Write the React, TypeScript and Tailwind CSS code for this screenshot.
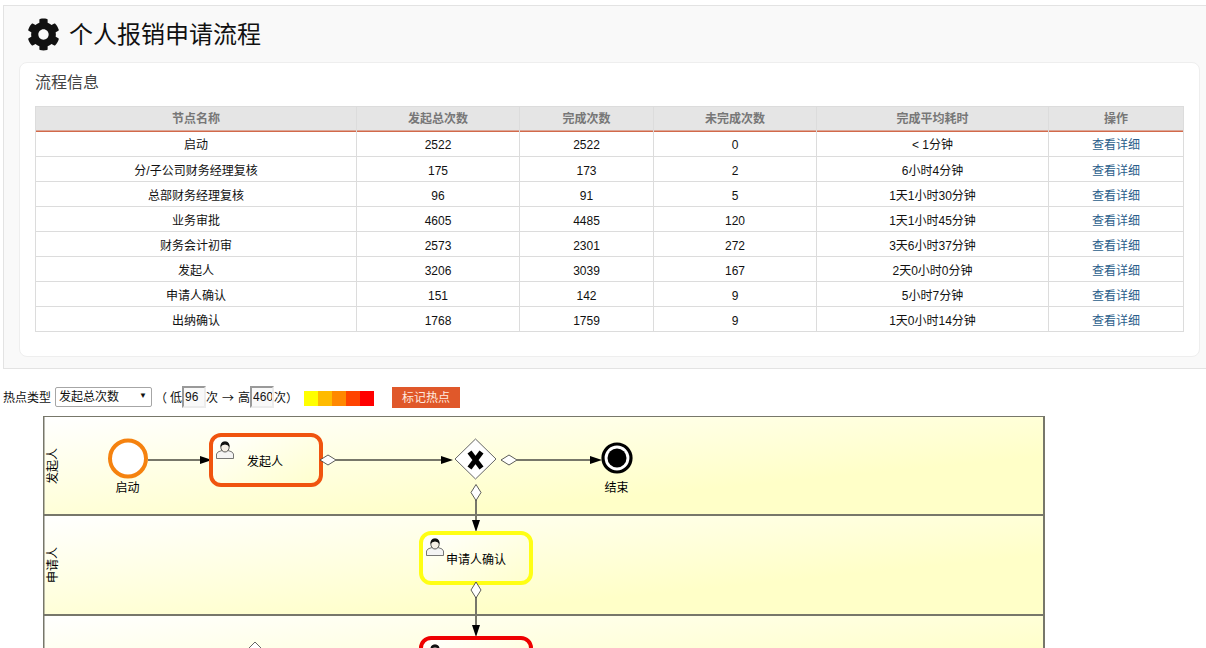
import React from 'react';
import { FaCog } from 'react-icons/fa';

const FONT = '"Liberation Sans", "Noto Sans CJK SC", sans-serif';

const columns = [321, 163, 134, 163, 232, 135];
const headers = ['节点名称', '发起总次数', '完成次数', '未完成次数', '完成平均耗时', '操作'];
const rows = [
  ['启动', '2522', '2522', '0', '< 1分钟'],
  ['分/子公司财务经理复核', '175', '173', '2', '6小时4分钟'],
  ['总部财务经理复核', '96', '91', '5', '1天1小时30分钟'],
  ['业务审批', '4605', '4485', '120', '1天1小时45分钟'],
  ['财务会计初审', '2573', '2301', '272', '3天6小时37分钟'],
  ['发起人', '3206', '3039', '167', '2天0小时0分钟'],
  ['申请人确认', '151', '142', '9', '5小时7分钟'],
  ['出纳确认', '1768', '1759', '9', '1天0小时14分钟'],
];
const heat = ['bg-[#ffff00]', 'bg-[#ffbb00]', 'bg-[#ff8800]', 'bg-[#ff4400]', 'bg-[#ff0000]'];

const Person = ({ x, y }: { x: number; y: number }) => (
  <g transform={`translate(${x} ${y})`}>
    <path d="M0.5 17.5 V13 Q1 10.5 6 9.5 H12 Q17 10.5 17.5 13 V17.5 Z" fill="#f4f4f4" stroke="#555" strokeWidth="0.8" />
    <ellipse cx="9" cy="6" rx="4.2" ry="5" fill="#f6f0e6" stroke="#333" strokeWidth="0.8" />
    <path d="M4.6 6 Q4 0.4 9 0.4 Q14 0.4 13.4 6 Q12 3.4 9 3.4 Q6 3.4 4.6 6 Z" fill="#111" />
  </g>
);

const SmallDiamond = ({ cx, cy, vertical }: { cx: number; cy: number; vertical?: boolean }) => {
  const a = vertical ? 5 : 8;
  const b = vertical ? 8 : 5;
  return <path d={`M${cx - a} ${cy} L${cx} ${cy - b} L${cx + a} ${cy} L${cx} ${cy + b} Z`} fill="#fff" stroke="#333" strokeWidth="0.8" />;
};

const ArrowRight = ({ x1, x2, y }: { x1: number; x2: number; y: number }) => (
  <g>
    <line x1={x1} y1={y} x2={x2 - 8} y2={y} stroke="#77776a" strokeWidth="2" />
    <path d={`M${x2} ${y} L${x2 - 12} ${y - 4} V${y + 4} Z`} fill="#000" />
  </g>
);

const ArrowDown = ({ x, y1, y2 }: { x: number; y1: number; y2: number }) => (
  <g>
    <line x1={x} y1={y1} x2={x} y2={y2 - 8} stroke="#77776a" strokeWidth="2" />
    <path d={`M${x} ${y2} L${x - 4} ${y2 - 12} H${x + 4} Z`} fill="#000" />
  </g>
);

const Task = ({ y, color }: { y: number; color: string }) => (
  <rect x="421" y={y} width="110" height="50" rx="10" fill="url(#taskFill)" stroke={color} strokeWidth="4" />
);

const Diagram = () => (
  <svg width="1003" height="232" viewBox="43 416 1003 232" className="block ml-[43px]" style={{ fontFamily: FONT }}>
    <defs>
      <linearGradient id="laneFill" x1="0" y1="0" x2="1" y2="1">
        <stop offset="0" stopColor="#ffffff" />
        <stop offset="0.7" stopColor="#ffffc8" />
        <stop offset="1" stopColor="#ffffc8" />
      </linearGradient>
      <linearGradient id="taskFill" x1="0" y1="0" x2="1" y2="1">
        <stop offset="0" stopColor="#ffffff" />
        <stop offset="1" stopColor="#ffffcc" />
      </linearGradient>
    </defs>

    {/* lanes */}
    <rect x="44" y="417" width="1000" height="98" fill="url(#laneFill)" />
    <rect x="44" y="515" width="1000" height="100" fill="url(#laneFill)" />
    <rect x="44" y="615" width="1000" height="100" fill="url(#laneFill)" />
    <line x1="43" y1="416.5" x2="1045" y2="416.5" stroke="#77776a" strokeWidth="1" />
    <line x1="43" y1="515" x2="1045" y2="515" stroke="#77776a" strokeWidth="2" />
    <line x1="43" y1="615" x2="1045" y2="615" stroke="#77776a" strokeWidth="2" />
    <line x1="43.5" y1="416" x2="43.5" y2="648" stroke="#77776a" strokeWidth="2" />
    <line x1="1044" y1="416" x2="1044" y2="648" stroke="#77776a" strokeWidth="2" />
    <text transform="translate(57 466) rotate(-90)" textAnchor="middle" fontSize="12" fill="#000">发起人</text>
    <text transform="translate(57 565) rotate(-90)" textAnchor="middle" fontSize="12" fill="#000">申请人</text>

    {/* edges */}
    <ArrowRight x1={148} x2={212} y={460} />
    <ArrowRight x1={336} x2={453} y={460} />
    <ArrowRight x1={517} x2={602} y={460} />
    <ArrowDown x={476} y1={500} y2={532} />
    <ArrowDown x={476} y1={597} y2={637} />

    {/* start */}
    <circle cx="128" cy="458.5" r="18" fill="#fff" stroke="#f5820f" strokeWidth="4" />
    <text x="127.5" y="492" textAnchor="middle" fontSize="12" fill="#000">启动</text>

    {/* first task */}
    <rect x="211" y="435" width="110" height="50" rx="10" fill="url(#taskFill)" stroke="#f0540f" strokeWidth="4" />
    <Person x={216} y={441} />
    <text x="265" y="466" textAnchor="middle" fontSize="12" fill="#000">发起人</text>
    <SmallDiamond cx={328} cy={460} />

    {/* gateway */}
    <path d="M475.5 439 L496 459 L475.5 479 L455 459 Z" fill="#fff" stroke="#666" strokeWidth="1" />
    <path d="M469.5 452 L481.5 468 M481.5 452 L469.5 468" stroke="#000" strokeWidth="5" />
    <SmallDiamond cx={509} cy={460} />
    <SmallDiamond cx={476} cy={492.5} vertical />

    {/* end */}
    <circle cx="617" cy="458" r="14" fill="#fff" stroke="#000" strokeWidth="3.2" />
    <circle cx="617" cy="458" r="9.5" fill="#000" />
    <text x="616.5" y="492" textAnchor="middle" fontSize="12" fill="#000">结束</text>

    {/* confirm task */}
    <Task y={533} color="#ffff14" />
    <Person x={426} y={538} />
    <text x="476" y="564" textAnchor="middle" fontSize="12" fill="#000">申请人确认</text>
    <SmallDiamond cx={476} cy={590} vertical />

    {/* lower lane */}
    <Task y={638} color="#ee0000" />
    <Person x={426} y={644} />
    <path d="M255 642 L275 662 L255 682 L235 662 Z" fill="#fff" stroke="#666" strokeWidth="1" />
  </svg>
);

export default function App() {
  return (
    <div className="h-[648px] w-[1206px] overflow-hidden bg-white pt-[5px] text-[12px] text-[#111]" style={{ fontFamily: FONT }}>
      <div className="ml-[3px] h-[364px] border border-r-0 border-[#e3e3e3] bg-[#f9f9f9] pl-[15px] pr-[6px]">
        <div className="flex h-[56px] items-center gap-[9px] pl-[8px] pt-[1px]">
          <FaCog className="h-[33px] w-[33px] text-[#111]" />
          <h1 className="text-[24px] leading-none text-[#111]">个人报销申请流程</h1>
        </div>
        <div className="h-[295px] rounded-[8px] border border-[#eeeeee] bg-white px-[15px]">
          <h2 className="flex h-[43px] items-center pb-[3px] text-[16px] text-[#444]">流程信息</h2>
          <table className="w-[1148px] table-fixed border-collapse text-center">
            <colgroup>
              {columns.map((w, i) => (
                <col key={i} style={{ width: w }} />
              ))}
            </colgroup>
            <thead>
              <tr className="h-[25px] bg-[#e5e5e5]">
                {headers.map(h => (
                  <th key={h} className="border border-b-0 border-[#dcdcdc] p-0 font-bold text-[#777] shadow-[inset_0_-1.5px_0_#d2694a]">{h}</th>
                ))}
              </tr>
            </thead>
            <tbody>
              {rows.map((row, r) => (
                <tr key={row[0]} className="h-[25px]">
                  {row.map((cell, i) => (
                    <td key={i} className={`border border-[#dcdcdc] p-0 pt-[3px] ${r === 0 ? 'border-t-0' : ''}`}>{cell}</td>
                  ))}
                  <td className={`border border-[#dcdcdc] p-0 pt-[3px] text-[#2a5d8a] ${r === 0 ? 'border-t-0' : ''}`}>查看详细</td>
                </tr>
              ))}
            </tbody>
          </table>
        </div>
      </div>

      <div className="mt-[17px] flex h-[22px] items-center pl-[3px] text-[#111]">
        <span className="pt-[2px]">热点类型</span>
        <div className="relative ml-[4px] mt-[-1px] h-[20px] w-[97px]">
          <select defaultValue="发起总次数" className="h-full w-full appearance-none rounded-[2px] border border-[#a6a6a6] bg-white pl-[3px] text-[12px]">
            <option>发起总次数</option>
          </select>
          <span className="pointer-events-none absolute right-[5px] top-[3px] text-[8px]">▼</span>
        </div>
        <span className="ml-[3px] w-[15px] pt-[2px] font-['Noto_Sans_CJK_SC']">（</span>
        <span className="pt-[2px]">低</span>
        <input readOnly value="96" className="h-[22px] w-[24px] border-2 border-[#ececec] border-l-[#999] border-t-[#999] bg-[#f9f9f9] pl-[1px] text-[12px]" />
        <span className="flex w-[44px] justify-between pt-[2px]">
          <span>次</span>
          <span className="font-['Noto_Sans_CJK_SC']">→</span>
          <span>高</span>
        </span>
        <input readOnly value="460" className="h-[22px] w-[24px] border-2 border-[#ececec] border-l-[#999] border-t-[#999] bg-[#f9f9f9] pl-[1px] text-[12px]" />
        <span className="pt-[2px]">次</span>
        <span className="w-[12px] pt-[2px] font-['Noto_Sans_CJK_SC']">）</span>
        <div className="ml-[6px] mt-[2px] flex">
          {heat.map(c => (
            <div key={c} className={`h-[15px] w-[14px] ${c}`} />
          ))}
        </div>
        <button className="ml-[18px] h-[21px] w-[68px] bg-[#e0582a] pt-[1px] text-[12px] text-[#ffe9df]">标记热点</button>
      </div>

      <div className="mt-[8px]">
        <Diagram />
      </div>
    </div>
  );
}
